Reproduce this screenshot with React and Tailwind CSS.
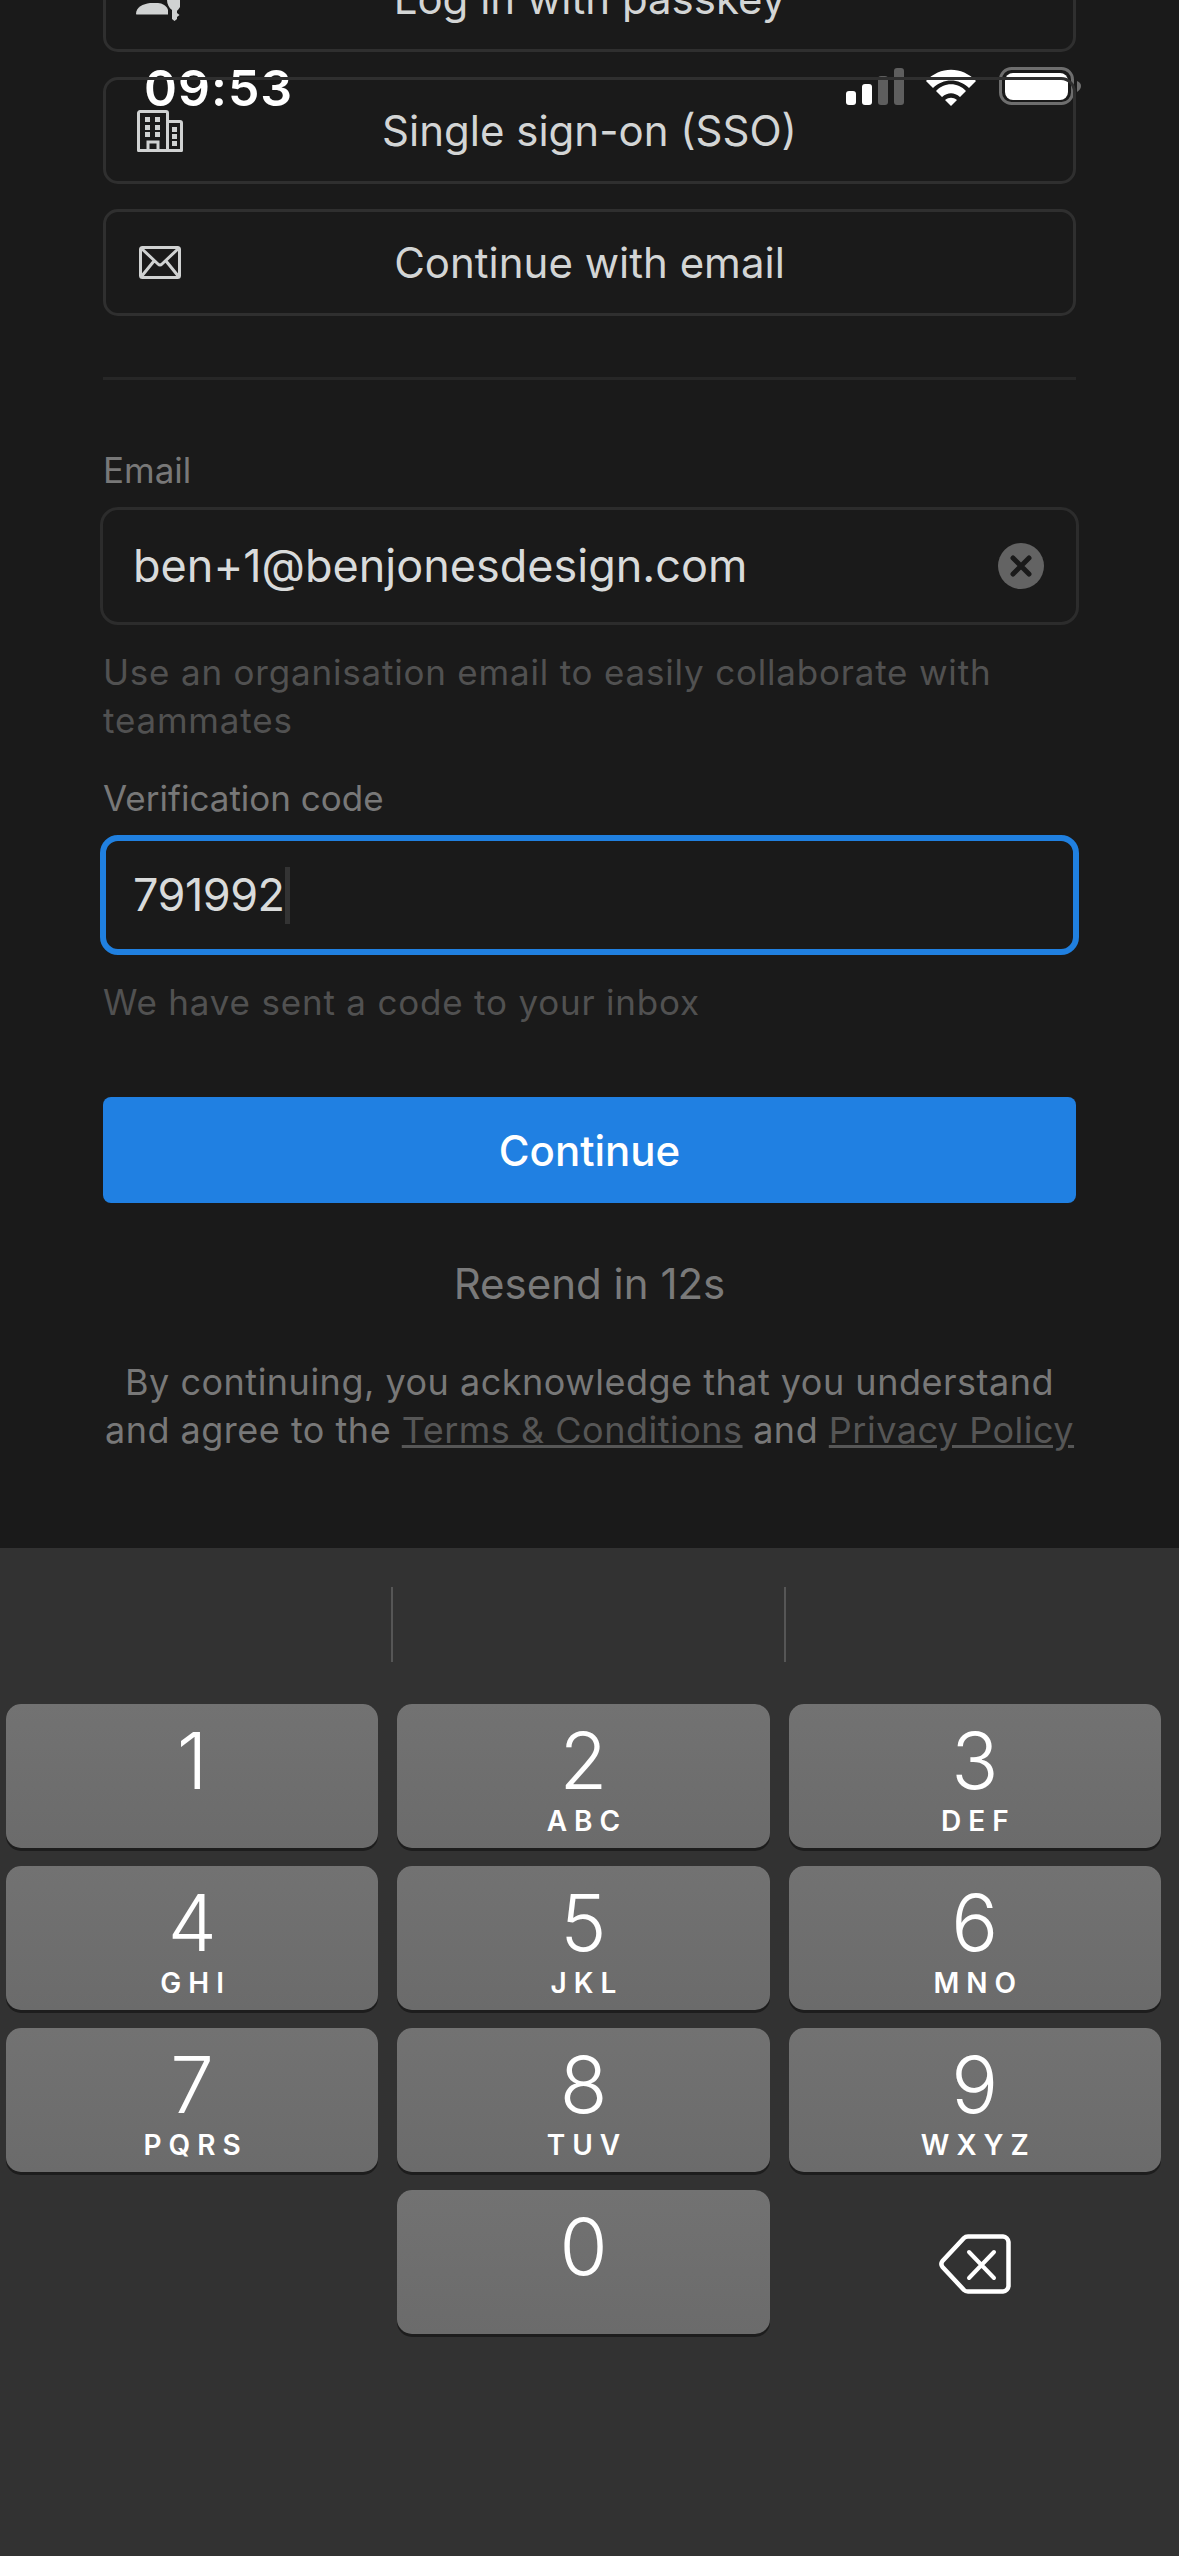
import React from "react";

const F = { fontFamily: "Inter, 'Liberation Sans', sans-serif" };

function Building() {
  return (
    <svg width="46" height="42" viewBox="0 0 46 42" fill="none">
      <path d="M1.5 40.5V3A1.5 1.5 0 0 1 3 1.5H29A1.5 1.5 0 0 1 30.5 3V11.5H43A1.5 1.5 0 0 1 44.5 13V40.5Z" stroke="#d0d2d2" strokeWidth="3" strokeLinejoin="round" />
      <path d="M30.5 11.5V40" stroke="#d0d2d2" strokeWidth="3" />
      <path d="M11 40V32H21V40" stroke="#d0d2d2" strokeWidth="3" />
      <g fill="#d0d2d2">
        <rect x="8" y="7" width="5" height="5" /><rect x="18" y="7" width="5" height="5" />
        <rect x="8" y="15" width="5" height="5" /><rect x="18" y="15" width="5" height="5" />
        <rect x="8" y="22" width="5" height="5" /><rect x="18" y="22" width="5" height="5" />
        <rect x="35" y="17" width="5" height="5" /><rect x="35" y="24" width="5" height="5" /><rect x="35" y="31" width="5" height="5" />
      </g>
    </svg>
  );
}

function Mail() {
  return (
    <svg width="42" height="33" viewBox="0 0 42 33" fill="none" stroke="#d0d2d2" strokeWidth="3" strokeLinejoin="round">
      <rect x="1.5" y="1.5" width="39" height="30" rx="2" />
      <path d="M2 2L19 18Q21 20 23 18L40 2M2 31L15 15M40 31L27 15" />
    </svg>
  );
}

function Passkey() {
  return (
    <svg width="46" height="21" viewBox="0 0 46 21" fill="#d0d2d2">
      <path d="M0 14C0 7 7 4 14 3H22C26 3 31 6 32 10V14.500H2C1 14.500 0 14.500 0 14Z" />
      <path d="M31 0H44V7C43 9 41.500 10 41 11V13L43.500 15L41 17L41 19L38.500 21L36 19V10C33 8 31 4 31 0Z" />
    </svg>
  );
}

function AuthButton({ icon, label, top }) {
  return (
    <div className="relative h-[107px] flex items-center justify-center rounded-[15px] border-[3px] border-[#2f2f2f]">
      <div className="absolute left-[30px] top-0 bottom-0 flex items-center w-[48px] justify-center">{icon}</div>
      <span className="text-[42px] leading-[56px] text-[#d3d5d5]">{label}</span>
    </div>
  );
}

function Key({ d, l }) {
  return (
    <div className="h-[147px] rounded-[15px] bg-[#1d1d1d]">
      <div className="h-[144px] rounded-[15px] bg-gradient-to-b from-[#727272] to-[#6b6b6b] flex flex-col items-center text-white">
        <div className="mt-[12px] text-[78px] leading-[90px] font-light">{d}</div>
        {l && <div className="mt-[-3px] text-[28px] leading-[36px] font-semibold tracking-[7px] pl-[7px]">{l}</div>}
      </div>
    </div>
  );
}

export default function App() {
  const keys = [["1", ""], ["2", "ABC"], ["3", "DEF"], ["4", "GHI"], ["5", "JKL"], ["6", "MNO"], ["7", "PQRS"], ["8", "TUV"], ["9", "WXYZ"]];
  return (
    <div style={F} className="relative w-[1179px] h-[2556px] overflow-hidden bg-[#1a1a1a] flex flex-col">
      <div className="absolute left-[144px] top-[60px] text-[50px] leading-[56px] font-semibold text-white tracking-[1px]">09:53</div>
      <div className="absolute left-[846px] top-[68px] w-[236px] h-[38px] flex items-end">
        <svg width="236" height="39" viewBox="0 0 236 39">
          <rect x="0" y="24" width="10" height="14" rx="3" fill="#fff" />
          <rect x="16" y="17" width="10" height="21" rx="3" fill="#fff" />
          <rect x="32" y="9" width="10" height="29" rx="3" fill="#5e5e5e" />
          <rect x="48" y="1" width="10" height="37" rx="3" fill="#5e5e5e" />
          <path d="M80 14C94 -1 116 -1 130 14L123 21C113 11 97 11 87 21Z" fill="#fff" />
          <path d="M90 24C98 15 112 15 120 24L114 30C108 25 102 25 96 30Z" fill="#fff" />
          <path d="M99 33C103 30 107 30 111 33L105 39Z" fill="#fff" />
          <rect x="154.500" y="1.500" width="72" height="35" rx="11" fill="none" stroke="#6e6e6e" strokeWidth="3" />
          <rect x="159" y="6" width="63" height="27" rx="8" fill="#fff" />
          <path d="M231 14C234 15 235 17 235 19C235 21 234 23 231 25Z" fill="#6e6e6e" />
        </svg>
      </div>

      <div className="mt-[-55px] mx-[103px] flex flex-col gap-[25px]">
        <AuthButton icon={<div className="h-[107px] w-full relative"><div className="absolute left-0 top-[55px]"><Passkey /></div></div>} label="Log in with passkey" />
        <AuthButton icon={<Building />} label="Single sign-on (SSO)" />
        <AuthButton icon={<Mail />} label="Continue with email" />
      </div>

      <div className="mx-[103px] mt-[61px] h-[3px] bg-[#272727]" />

      <div className="mx-[103px] mt-[68px] text-[35px] leading-[44px] text-[#787878]">Email</div>
      <div className="mx-[100px] mt-[15px] h-[118px] rounded-[18px] border-[3px] border-[#2c2c2c] flex items-center pl-[30px] pr-[32px]">
        <span className="flex-1 text-[45px] leading-[56px] text-[#d9dbdb]">ben+1@benjonesdesign.com</span>
        <svg width="46" height="46" viewBox="0 0 46 46">
          <circle cx="23" cy="23" r="23" fill="#636363" />
          <path d="M15 15L31 31M31 15L15 31" stroke="#1a1a1a" strokeWidth="5" strokeLinecap="round" />
        </svg>
      </div>
      <div className="mx-[103px] mt-[23px] text-[35px] leading-[48px] tracking-[0.8px] text-[#515151]">
        Use an organisation email to easily collaborate with<br />teammates
      </div>

      <div className="mx-[103px] mt-[32px] text-[35px] leading-[44px] text-[#787878]">Verification code</div>
      <div className="mx-[100px] mt-[15px] h-[120px] rounded-[18px] border-[6px] border-[#2080e0] flex items-center pl-[27px]">
        <span className="text-[45px] leading-[56px] text-[#d9dbdb] tracking-[-0.5px]">791992</span>
        <span className="w-[5px] h-[57px] bg-[#333]" />
      </div>
      <div className="mx-[103px] mt-[23px] text-[35px] leading-[48px] tracking-[0.8px] text-[#515151]">We have sent a code to your inbox</div>

      <div className="mx-[103px] mt-[71px] h-[106px] rounded-[8px] bg-[#2080e2] flex items-center justify-center text-[42px] font-medium text-white">Continue</div>

      <div className="mt-[53px] text-center text-[42px] leading-[56px] text-[#7a7a7a]">Resend in 12s</div>

      <div className="mt-[46px] text-center text-[36px] leading-[48px] tracking-[0.5px] text-[#787878]">
        By continuing, you acknowledge that you understand<br />
        and agree to the <span className="underline text-[#565656]">Terms &amp; Conditions</span> and <span className="underline text-[#565656]">Privacy Policy</span>
      </div>

      <div className="absolute left-0 right-0 top-[1548px] bottom-0 bg-[#323232]">
        <div className="h-[156px] relative">
          <div className="absolute left-[391px] top-[39px] w-[2px] h-[75px] bg-[#565656]" />
          <div className="absolute left-[784px] top-[39px] w-[2px] h-[75px] bg-[#565656]" />
        </div>
        <div className="ml-[6px] mr-[18px] grid grid-cols-3 gap-x-[19px] gap-y-[15px]">
          {keys.map(([d, l]) => <Key key={d} d={d} l={l} />)}
          <div />
          <Key d="0" l="" />
          <div className="flex items-center justify-center">
            <svg width="72" height="60" viewBox="0 0 72 60" fill="none" stroke="#fff" strokeLinejoin="round" strokeLinecap="round">
              <path d="M29 2.500H64A6 6 0 0 1 69.500 8V52A6 6 0 0 1 64 57.500H29C27 57.500 26 57 25 56L3.500 33C2 31 2 29 3.500 27L25 4C26 3 27 2.500 29 2.500Z" strokeWidth="4.500" />
              <path d="M30 18L55 44M55 18L30 44" strokeWidth="4" />
            </svg>
          </div>
        </div>
      </div>
    </div>
  );
}
